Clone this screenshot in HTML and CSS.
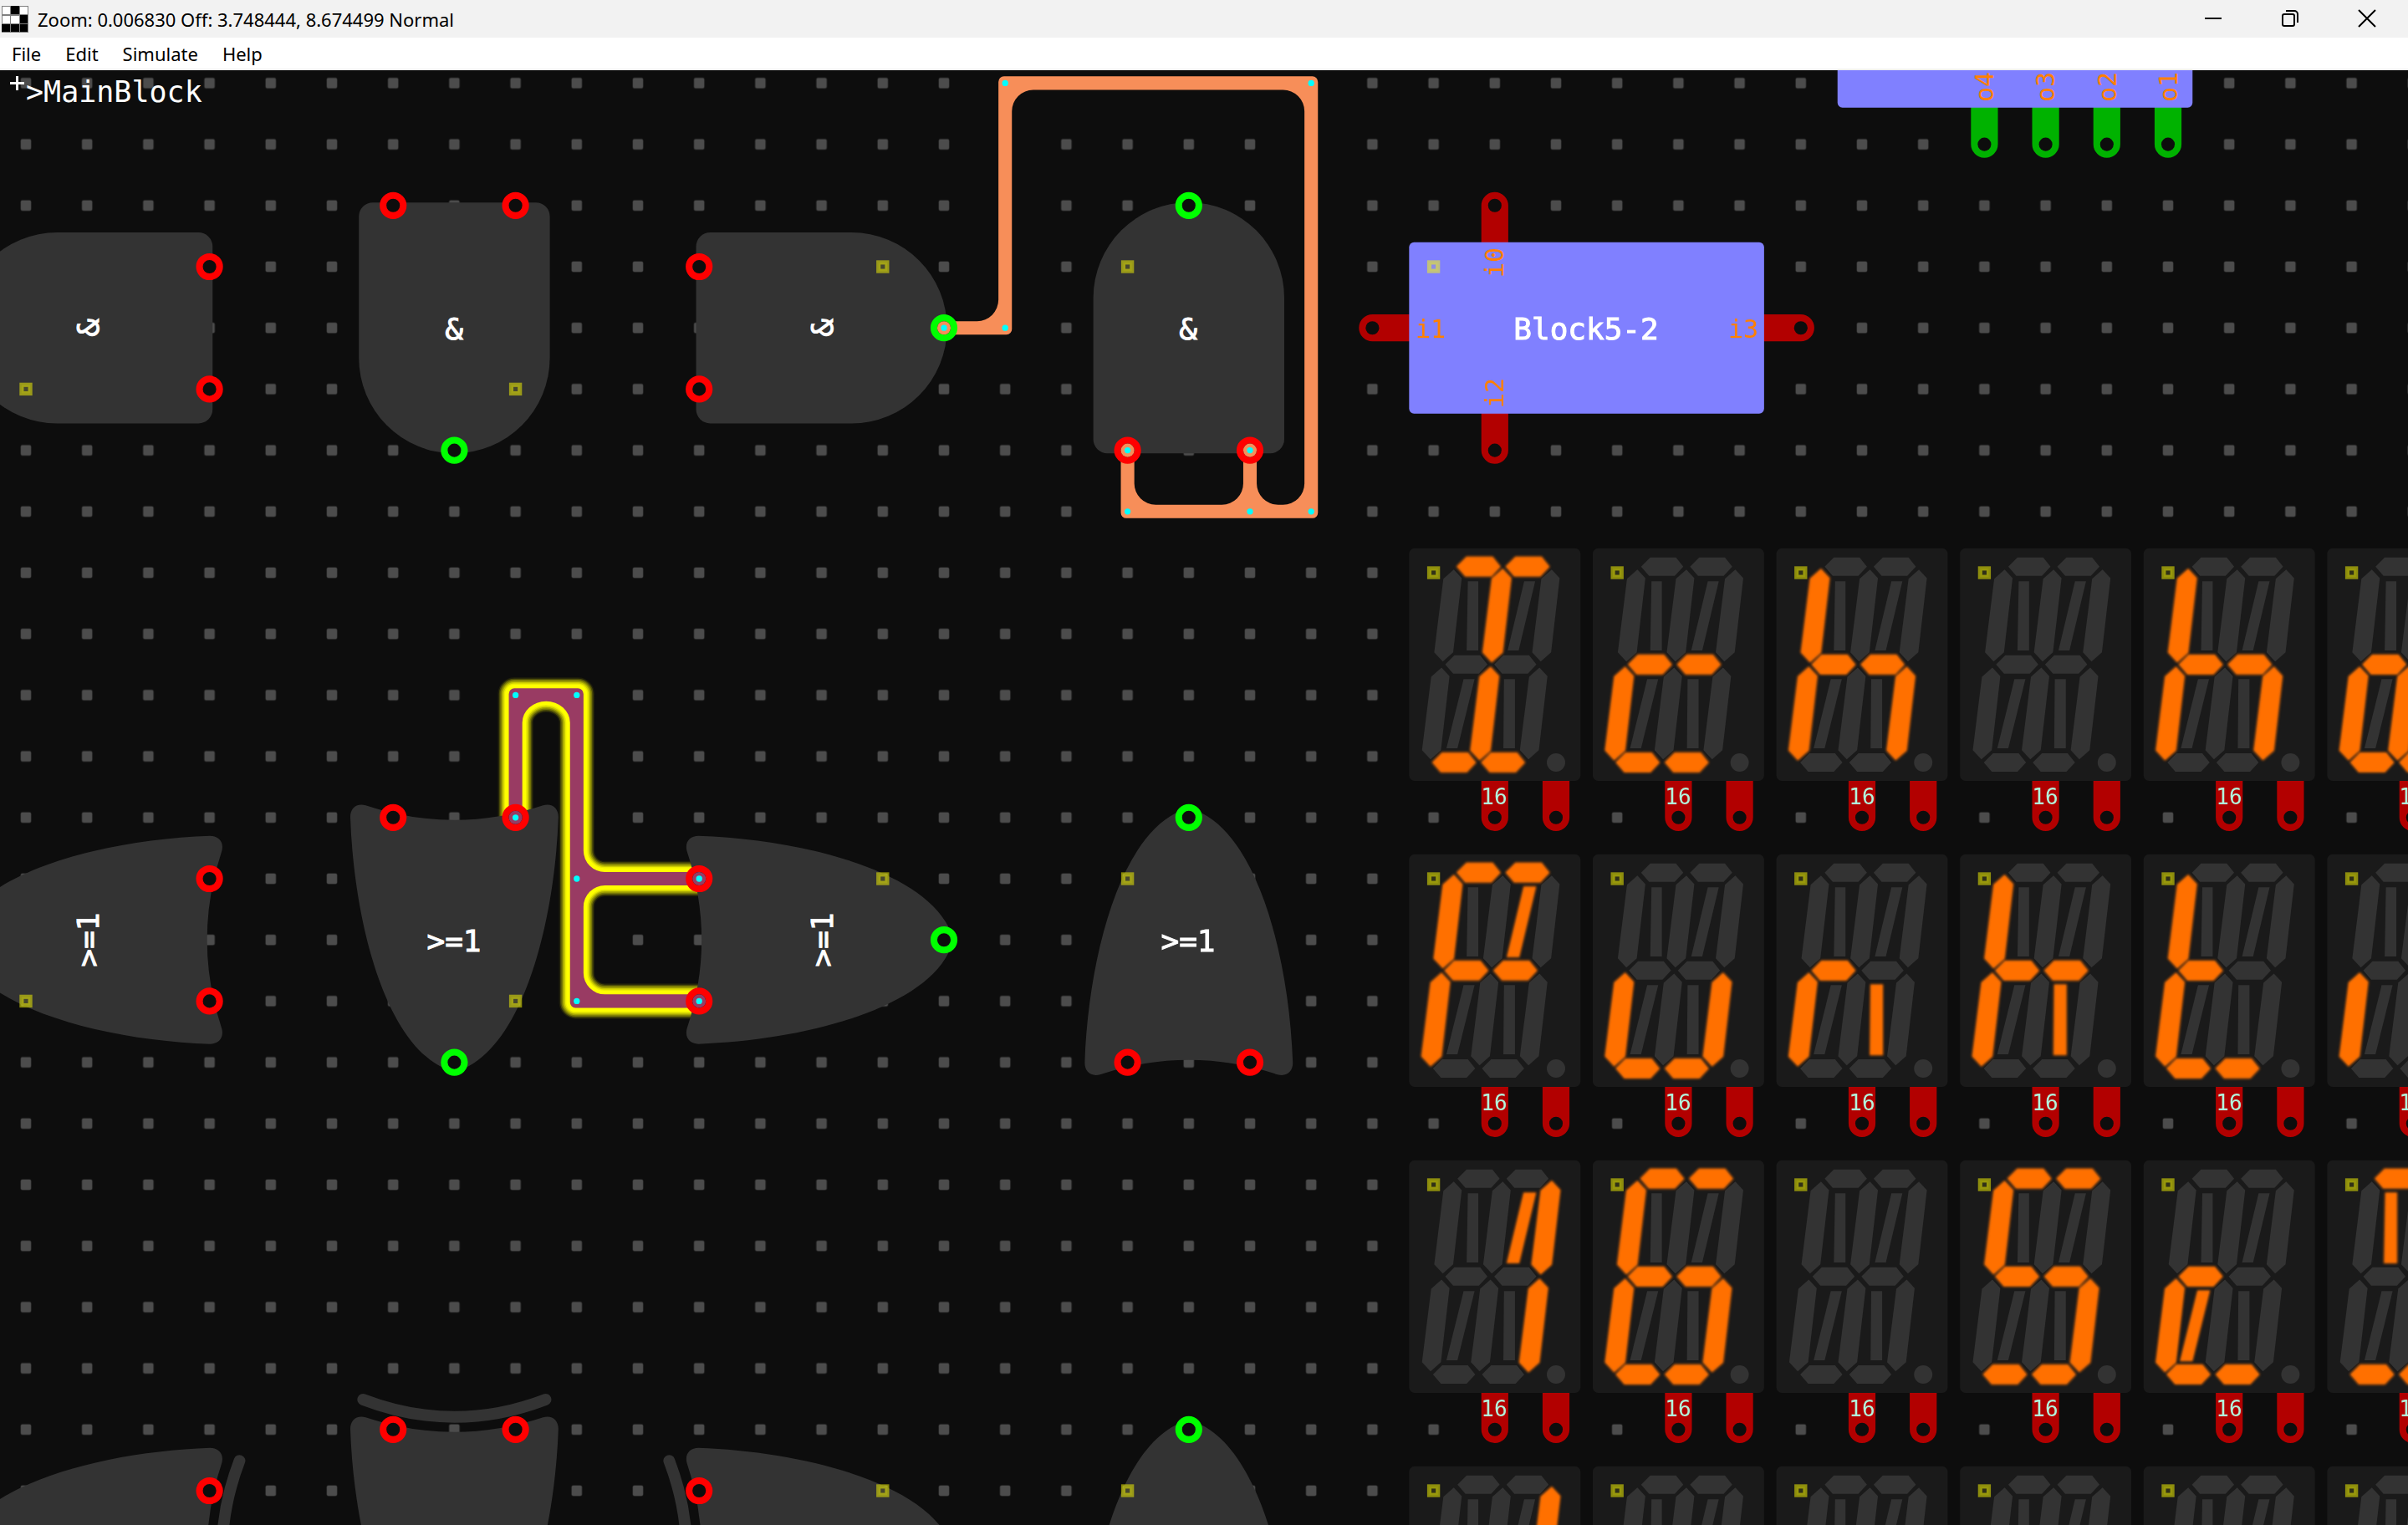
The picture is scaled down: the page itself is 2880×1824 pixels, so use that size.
FILE: index.html
```html
<!DOCTYPE html>
<html lang="en">
<head>
<meta charset="utf-8">
<title>Circuit editor</title>
<link rel="stylesheet" href="styles.css">
</head>
<body>
<div class="window">
  <header class="titlebar">
    <svg class="app-icon" viewBox="0 0 32 32" aria-hidden="true">
      <rect width="32" height="32" fill="#808080"/>
      <path fill="#fff" d="M1 1h9v9H1zM22 1h9v9h-9zM1 12h9v9H1zM11 12h10v9H11z"/>
      <path fill="#000" d="M11 0h10v10H11zM22 11h9v10h-9zM0 22h10v9H0zM11 22h10v9H11zM22 22h9v9h-9z"/>
    </svg>
    <span class="title">Zoom: 0.006830 Off: 3.748444, 8.674499 Normal</span>
    <div class="controls">
      <button type="button" aria-label="Minimize"><svg viewBox="0 0 20 20"><path d="M0 10h20"/></svg></button>
      <button type="button" aria-label="Restore"><svg viewBox="0 0 20 20"><rect x="1" y="5" width="14" height="14" rx="2"/><path d="M5 1h10a4 4 0 0 1 4 4v10"/></svg></button>
      <button type="button" aria-label="Close"><svg viewBox="0 0 20 20"><path d="M0 0l20 20M20 0L0 20"/></svg></button>
    </div>
  </header>
  <nav class="menubar">
    <button type="button">File</button>
    <button type="button">Edit</button>
    <button type="button">Simulate</button>
    <button type="button">Help</button>
  </nav>
  <main class="workspace">
    <svg class="board" role="img" aria-label="MainBlock circuit">
      <defs>
        <pattern id="grid" x="-50" y="-50" width="100" height="100" patternUnits="userSpaceOnUse">
          <rect x="41" y="41" width="18" height="18" rx="4" fill="#2c2c2c"/>
          <rect x="42" y="42" width="16" height="16" rx="2" fill="#4c4c4c"/>
        </pattern>

        <!-- markers and pins -->
        <g id="mark">
          <rect x="-7" y="-7" width="14" height="14" fill="#ff0" fill-opacity=".1"/>
          <rect x="-7" y="-7" width="14" height="14" fill="none" stroke="#ff0" stroke-width="7" stroke-opacity=".5"/>
        </g>
        <circle id="pin" r="16.5" stroke-width="11"/>
        <circle id="hole" r="11" fill="#0d0d0d"/>
        <circle id="node" r="5" fill="#0ff"/>

        <!-- gates, facing right, centred on their grid point -->
        <g id="gate-pins">
          <use href="#mark" x="100" y="-100"/>
          <g class="in"><use href="#pin" x="-200" y="-100"/><use href="#pin" x="-200" y="100"/></g>
          <g class="out"><use href="#pin" x="200" y="0"/></g>
        </g>
        <g id="and">
          <path class="body" d="M-182-156H49A156 156 0 0 1 49 156H-182A23 23 0 0 1-205 133V-133A23 23 0 0 1-182-156Z"/>
          <use href="#gate-pins"/>
        </g>
        <path id="or-body" class="body" d="M-201-170C-30-164 160-114 207-22Q216 0 207 22C160 114-30 164-201 170C-215 170-224 160-220 145Q-172 0-220-145C-224-160-215-170-201-170Z"/>
        <g id="or"><use href="#or-body"/><use href="#gate-pins"/></g>
        <g id="xor">
          <path class="bar" d="M-249-149Q-192 0-249 149"/>
          <use href="#or-body"/><use href="#gate-pins"/>
        </g>

        <!-- sixteen-segment display, origin at its top left corner -->
        <path id="a1" d="M79 30L94 15H136L148 30L134 45H92Z"/>
        <use id="a2" href="#a1" x="80"/>
        <use id="g1" href="#a1" x="-20" y="160"/>
        <use id="g2" href="#a1" x="60" y="160"/>
        <use id="d1" href="#a1" x="-40" y="320"/>
        <use id="d2" href="#a1" x="40" y="320"/>
        <path id="f" d="M73 35L86 49L72 170L55 185L41 170L56 50Z"/>
        <use id="m" href="#f" x="80"/>
        <use id="b" href="#f" x="160"/>
        <use id="e" href="#f" x="-20" y="160"/>
        <use id="l" href="#f" x="60" y="160"/>
        <use id="c" href="#f" x="140" y="160"/>
        <path id="h" d="M96 54H113V167H94Z"/>
        <path id="j" d="M188 54H206L179 167H161Z"/>
        <path id="n" d="M89 214H107L79 327H61Z"/>
        <path id="k" d="M155 214H173V327H154Z"/>
        <g id="display">
          <path class="stub red" d="M140 370V440M240 370V440"/>
          <use href="#hole" x="140" y="440"/><use href="#hole" x="240" y="440"/>
          <rect width="280" height="380" rx="9" fill="#1a1a1a"/>
          <g fill="#333">
            <use href="#a1"/><use href="#a2"/><use href="#g1"/><use href="#g2"/><use href="#d1"/><use href="#d2"/>
            <use href="#f"/><use href="#m"/><use href="#b"/><use href="#e"/><use href="#l"/><use href="#c"/>
            <use href="#h"/><use href="#j"/><use href="#n"/><use href="#k"/>
            <circle cx="240" cy="350" r="15"/>
          </g>
          <use href="#mark" x="40" y="40"/>
        </g>

        <path id="net-b" d="M789 1200V998A9 9 0 0 1 798 989H902A9 9 0 0 1 911 998V1254A35 35 0 0 0 946 1289H1100V1311H946A35 35 0 0 0 911 1346V1454A35 35 0 0 0 946 1489H1100V1511H898A9 9 0 0 1 889 1502V1045A39 35 0 0 0 811 1045V1200Z"/>
      </defs>

      <!-- one grid step is 100 units -->
      <g transform="translate(31 15.4) scale(.732)">
        <rect x="-100" y="-100" width="6000" height="4000" fill="url(#grid)"/>

        <path fill="#f78e59" d="M1500 389H1554A35 35 0 0 0 1589 354V-2A9 9 0 0 1 1598-11H2102A9 9 0 0 1 2111-2V702A9 9 0 0 1 2102 711H1798A9 9 0 0 1 1789 702V600H1811V654A35 35 0 0 0 1846 689H1954A35 35 0 0 0 1989 654V600H2011V654A35 35 0 0 0 2046 689H2054A35 35 0 0 0 2089 654V46A35 35 0 0 0 2054 11H1646A35 35 0 0 0 1611 46V402A9 9 0 0 1 1602 411H1500Z"/>

        <g class="glow">
          <use href="#net-b" stroke="#1f1f0b" stroke-width="36"/>
          <use href="#net-b" stroke="#4a4a09" stroke-width="32"/>
          <use href="#net-b" stroke="#777706" stroke-width="28"/>
          <use href="#net-b" stroke="#a2a204" stroke-width="24"/>
          <use href="#net-b" stroke="#cccc02" stroke-width="20"/>
          <use href="#net-b" stroke="#eeee01" stroke-width="16"/>
          <use href="#net-b" stroke="#ff0" stroke-width="12"/>
        </g>
        <use href="#net-b" fill="#993b63"/>

        <!-- AND row -->
        <use href="#and" transform="translate(100 400) rotate(180)"/>
        <use href="#and" transform="translate(700 400) rotate(90)"/>
        <use href="#and" transform="translate(1300 400)"/>
        <use href="#and" transform="translate(1900 400) rotate(-90)"/>
        <!-- OR row -->
        <use href="#or" transform="translate(100 1400) rotate(180)"/>
        <use href="#or" transform="translate(700 1400) rotate(90)"/>
        <use href="#or" transform="translate(1300 1400)"/>
        <use href="#or" transform="translate(1900 1400) rotate(-90)"/>
        <!-- XOR row -->
        <use href="#xor" transform="translate(100 2400) rotate(180)"/>
        <use href="#xor" transform="translate(700 2400) rotate(90)"/>
        <use href="#xor" transform="translate(1300 2400)"/>
        <use href="#xor" transform="translate(1900 2400) rotate(-90)"/>

        <!-- pins that carry a net show its colour -->
        <g fill="#f78e59"><circle cx="1500" cy="400" r="11"/><circle cx="1800" cy="600" r="11"/><circle cx="2000" cy="600" r="11"/></g>
        <g fill="#993b63"><circle cx="800" cy="1200" r="11"/><circle cx="1100" cy="1300" r="11"/><circle cx="1100" cy="1500" r="11"/></g>
        <use href="#node" x="1500" y="400"/><use href="#node" x="1600" y="400"/><use href="#node" x="1600" y="0"/>
        <use href="#node" x="2100" y="0"/><use href="#node" x="2100" y="700"/><use href="#node" x="2000" y="700"/>
        <use href="#node" x="1800" y="700"/><use href="#node" x="1800" y="600"/><use href="#node" x="2000" y="600"/>
        <use href="#node" x="800" y="1200"/><use href="#node" x="800" y="1000"/><use href="#node" x="900" y="1000"/>
        <use href="#node" x="900" y="1300"/><use href="#node" x="900" y="1500"/><use href="#node" x="1100" y="1300"/><use href="#node" x="1100" y="1500"/>

        <!-- blocks -->
        <path class="stub red" d="M2400 200V600M2200 400H2900"/>
        <use href="#hole" x="2400" y="200"/><use href="#hole" x="2400" y="600"/><use href="#hole" x="2200" y="400"/><use href="#hole" x="2900" y="400"/>
        <rect class="block" x="2260" y="260" width="580" height="280" rx="8"/>
        <use href="#mark" x="2300" y="300"/>
        <path class="stub green" d="M3200 0V100M3300 0V100M3400 0V100M3500 0V100"/>
        <use href="#hole" x="3200" y="100"/><use href="#hole" x="3300" y="100"/><use href="#hole" x="3400" y="100"/><use href="#hole" x="3500" y="100"/>
        <rect class="block" x="2960" y="-240" width="580" height="280" rx="8"/>

        <!-- displays, first row -->
        <g transform="translate(2260 760)"><use href="#display"/><g class="lit"><use href="#a1"/><use href="#a2"/><use href="#m"/><use href="#l"/><use href="#d1"/><use href="#d2"/></g></g>
        <g transform="translate(2560 760)"><use href="#display"/><g class="lit"><use href="#g1"/><use href="#g2"/><use href="#e"/><use href="#d1"/><use href="#d2"/></g></g>
        <g transform="translate(2860 760)"><use href="#display"/><g class="lit"><use href="#f"/><use href="#g1"/><use href="#g2"/><use href="#e"/><use href="#c"/></g></g>
        <g transform="translate(3160 760)"><use href="#display"/></g>
        <g transform="translate(3460 760)"><use href="#display"/><g class="lit"><use href="#f"/><use href="#g1"/><use href="#g2"/><use href="#e"/><use href="#c"/></g></g>
        <g transform="translate(3760 760)"><use href="#display"/><g class="lit"><use href="#g1"/><use href="#e"/><use href="#l"/><use href="#d1"/><use href="#d2"/></g></g>
        <!-- second row -->
        <g transform="translate(2260 1260)"><use href="#display"/><g class="lit"><use href="#a1"/><use href="#a2"/><use href="#f"/><use href="#j"/><use href="#g1"/><use href="#g2"/><use href="#e"/></g></g>
        <g transform="translate(2560 1260)"><use href="#display"/><g class="lit"><use href="#e"/><use href="#c"/><use href="#d1"/><use href="#d2"/></g></g>
        <g transform="translate(2860 1260)"><use href="#display"/><g class="lit"><use href="#g1"/><use href="#e"/><use href="#k"/></g></g>
        <g transform="translate(3160 1260)"><use href="#display"/><g class="lit"><use href="#f"/><use href="#g1"/><use href="#g2"/><use href="#e"/><use href="#k"/></g></g>
        <g transform="translate(3460 1260)"><use href="#display"/><g class="lit"><use href="#f"/><use href="#g1"/><use href="#e"/><use href="#d1"/><use href="#d2"/></g></g>
        <g transform="translate(3760 1260)"><use href="#display"/><g class="lit"><use href="#e"/></g></g>
        <!-- third row -->
        <g transform="translate(2260 1760)"><use href="#display"/><g class="lit"><use href="#j"/><use href="#b"/><use href="#c"/></g></g>
        <g transform="translate(2560 1760)"><use href="#display"/><g class="lit"><use href="#a1"/><use href="#a2"/><use href="#f"/><use href="#g1"/><use href="#g2"/><use href="#e"/><use href="#c"/><use href="#d1"/><use href="#d2"/></g></g>
        <g transform="translate(2860 1760)"><use href="#display"/></g>
        <g transform="translate(3160 1760)"><use href="#display"/><g class="lit"><use href="#a1"/><use href="#a2"/><use href="#f"/><use href="#g1"/><use href="#g2"/><use href="#c"/><use href="#d1"/><use href="#d2"/></g></g>
        <g transform="translate(3460 1760)"><use href="#display"/><g class="lit"><use href="#g1"/><use href="#e"/><use href="#n"/><use href="#d1"/><use href="#d2"/></g></g>
        <g transform="translate(3760 1760)"><use href="#display"/><g class="lit"><use href="#a1"/><use href="#a2"/><use href="#h"/><use href="#d1"/><use href="#d2"/></g></g>
        <!-- fourth row -->
        <g transform="translate(2260 2260)"><use href="#display"/><g class="lit"><use href="#b"/></g></g>
        <use href="#display" x="2560" y="2260"/>
        <use href="#display" x="2860" y="2260"/>
        <use href="#display" x="3160" y="2260"/>
        <use href="#display" x="3460" y="2260"/>
        <use href="#display" x="3760" y="2260"/>
      </g>

      <!-- cursor -->
      <path fill="#fff" d="M19 7h3v7h7v3h-7v7h-3v-7h-7v-3h7z"/>

      <text class="name" x="31" y="38">&gt;MainBlock</text>

      <g class="label">
        <text transform="translate(118 308) rotate(-90)">&amp;</text>
        <text x="543" y="322">&amp;</text>
        <text transform="translate(996 308) rotate(-90)">&amp;</text>
        <text x="1421" y="322">&amp;</text>
        <text transform="translate(118 1040) rotate(-90)">&gt;=1</text>
        <text x="543" y="1054">&gt;=1</text>
        <text transform="translate(996 1040) rotate(-90)">&gt;=1</text>
        <text x="1421" y="1054">&gt;=1</text>
        <text x="1897" y="322">Block5-2</text>
      </g>

      <g class="port">
        <text x="1711" y="320">i1</text>
        <text x="2085" y="320">i3</text>
        <text transform="translate(1798 230) rotate(-90)">i0</text>
        <text transform="translate(1798 386) rotate(-90)">i2</text>
        <text transform="translate(2384 20) rotate(-90)">o4</text>
        <text transform="translate(2457 20) rotate(-90)">o3</text>
        <text transform="translate(2531 20) rotate(-90)">o2</text>
        <text transform="translate(2604 20) rotate(-90)">o1</text>
      </g>

      <g class="width">
        <text x="1787" y="878">16</text><text x="2007" y="878">16</text><text x="2227" y="878">16</text>
        <text x="2446" y="878">16</text><text x="2666" y="878">16</text><text x="2885" y="878">16</text>
        <text x="1787" y="1244">16</text><text x="2007" y="1244">16</text><text x="2227" y="1244">16</text>
        <text x="2446" y="1244">16</text><text x="2666" y="1244">16</text><text x="2885" y="1244">16</text>
        <text x="1787" y="1610">16</text><text x="2007" y="1610">16</text><text x="2227" y="1610">16</text>
        <text x="2446" y="1610">16</text><text x="2666" y="1610">16</text><text x="2885" y="1610">16</text>
      </g>
    </svg>
  </main>
</div>
</body>
</html>
```
FILE: styles.css
```css
* { box-sizing: border-box; }
body { margin: 0; font-family: "Noto Sans", "Open Sans", sans-serif; color: #000; }

.window { display: flex; flex-direction: column; height: 100vh; background: #0d0d0d; }

.titlebar { display: flex; align-items: center; height: 45px; padding: 0 3px 0 2px; background: #f2f2f2; }
.app-icon { width: 32px; height: 32px; }
.title { margin-left: 11px; font-size: 22px; line-height: 32px; white-space: nowrap; }
.controls { display: flex; margin-left: auto; height: 100%; }
.controls button { width: 92px; padding: 0 0 2px; border: 0; background: none; display: flex; align-items: center; justify-content: center; }
.controls svg { width: 20px; height: 20px; fill: none; stroke: #000; stroke-width: 2; overflow: visible; }

.menubar { display: flex; gap: 29px; height: 39px; padding-left: 14px; background: #fff; border-bottom: 2px solid #f0f0f0; }
.menubar button { padding: 0; border: 0; background: none; font: inherit; font-size: 22px; line-height: 36px; color: #000; }

.workspace { flex: 1; min-height: 0; overflow: hidden; }
.board { display: block; width: 100%; height: 100%; }

.body { fill: #333; }
.bar { fill: none; stroke: #333; stroke-width: 19; stroke-linecap: round; }
.in, .out { fill: #0d0d0d; }
.in { stroke: #f00; }
.out { stroke: #0f0; }
.stub { fill: none; stroke-width: 44; stroke-linecap: round; }
.red { stroke: #b20000; }
.green { stroke: #00b200; }
.block { fill: #8080ff; }
.glow { fill: none; stroke-linejoin: round; }
.lit { fill: #ff7000; stroke: #ff7000; stroke-width: 3; filter: blur(2px); }

.board text { font-family: "DejaVu Sans Mono", monospace; }
.name { fill: #fff; font-size: 35px; }
.label { fill: #fff; stroke: #fff; stroke-width: 1px; font-size: 36px; text-anchor: middle; }
.port { fill: #ff8000; font-size: 30px; text-anchor: middle; }
.width { fill: #b2f5dc; font-size: 26px; text-anchor: middle; }
```
